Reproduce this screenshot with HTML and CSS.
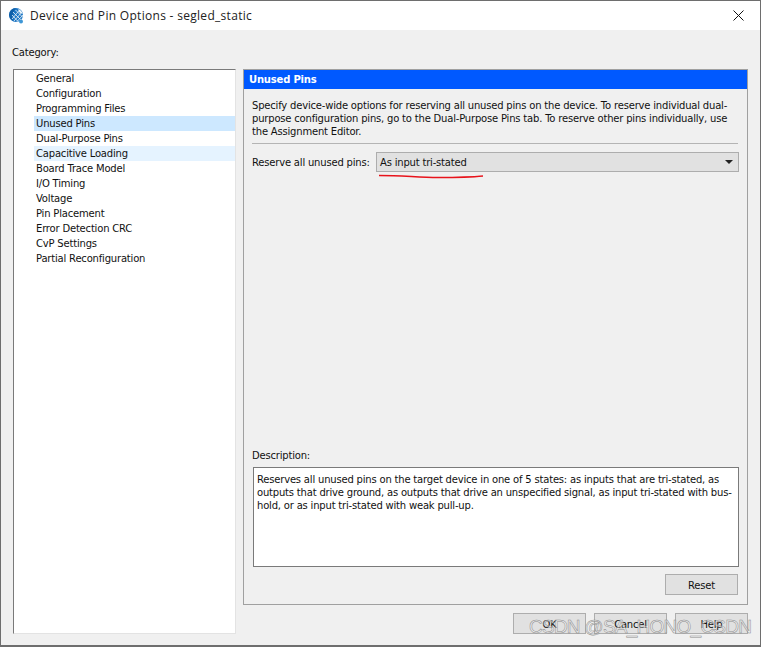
FILE: index.html
```html
<!DOCTYPE html>
<html lang="en">
<head>
<meta charset="utf-8">
<title>Device and Pin Options - segled_static</title>
<link rel="stylesheet" href="styles.css">
</head>
<body>
<div class="window">
  <header class="titlebar">
    <svg class="app-icon" viewBox="0 0 16 16" width="16" height="16" aria-hidden="true">
      <circle cx="7" cy="7" r="7" fill="#1f77c4"/>
      <path d="M0 7A7 7 0 0 1 7 0C4 3 3 8 4 13C2 12 .5 10 0 7Z" fill="#0f5fa8"/>
      <path d="M3 11L11 1.500M5 13L13 4M8 13.500L14 7M4 4L12 12M6.500 2L14 9.500M3 7L9 13.500" stroke="#dbe9f4" stroke-width=".9" fill="none"/>
      <path d="M9 1.200C11.500 1.500 13 3.500 13.500 6L10.500 4.500Z" fill="#f1f7fb"/>
      <circle cx="12" cy="13.500" r="2" fill="#3f97d6"/>
    </svg>
    <span class="title-text">Device and Pin Options - segled_static</span>
    <svg class="close-icon" viewBox="0 0 11 11" width="11" height="11" aria-hidden="true">
      <path d="M.5.5L10.500 10.500M10.500.5L.5 10.500" stroke="#111" stroke-width="1" fill="none"/>
    </svg>
  </header>
  <main class="content">
    <div class="category-label">Category:</div>
    <div class="columns">
      <ul class="category-list">
        <li>General</li>
        <li>Configuration</li>
        <li>Programming Files</li>
        <li class="selected">Unused Pins</li>
        <li>Dual-Purpose Pins</li>
        <li class="hovered">Capacitive Loading</li>
        <li>Board Trace Model</li>
        <li>I/O Timing</li>
        <li>Voltage</li>
        <li>Pin Placement</li>
        <li>Error Detection CRC</li>
        <li>CvP Settings</li>
        <li>Partial Reconfiguration</li>
      </ul>
      <div class="right-column">
        <section class="panel">
          <h2 class="panel-header">Unused Pins</h2>
          <div class="panel-body">
            <p class="intro">Specify device-wide options for reserving all unused pins on the device. To reserve individual dual-<br>purpose configuration pins, go to the Dual-Purpose Pins tab. To reserve other pins individually, use<br>the Assignment Editor.</p>
            <hr class="rule">
            <div class="reserve-row">
              <span class="reserve-label">Reserve all unused pins:</span>
              <div class="combo">
                <span>As input tri-stated</span>
                <span class="arrow"></span>
                <svg class="scribble" viewBox="0 0 106 5" width="106" height="5" aria-hidden="true">
                  <path d="M1 1.500C25 1.500 40 3.500 60 3.500C80 3.500 95 3 105 2" stroke="#e8131b" stroke-width="1.600" fill="none"/>
                </svg>
              </div>
            </div>
            <div class="spacer"></div>
            <div class="desc-label">Description:</div>
            <div class="desc-box">Reserves all unused pins on the target device in one of 5 states: as inputs that are tri-stated, as<br>outputs that drive ground, as outputs that drive an unspecified signal, as input tri-stated with bus-<br>hold, or as input tri-stated with weak pull-up.</div>
            <div class="reset-row"><button class="btn" type="button">Reset</button></div>
          </div>
        </section>
        <div class="dialog-buttons">
          <button class="btn" type="button">OK</button>
          <button class="btn" type="button">Cancel</button>
          <button class="btn" type="button">Help</button>
        </div>
      </div>
    </div>
  </main>
  <div class="watermark">CSDN @SA_HONO_CSDN</div>
</div>
</body>
</html>
```
FILE: styles.css
```css
* { box-sizing: border-box; }
html, body { margin: 0; padding: 0; }
body {
  width: 761px;
  height: 647px;
  overflow: hidden;
  font-family: "DejaVu Sans", sans-serif;
  font-size: 10px;
  letter-spacing: -.19px;
  color: #111;
}
.window {
  position: relative;
  width: 761px;
  height: 647px;
  display: flex;
  flex-direction: column;
  background: #f0f0f0;
  border: 1px solid #6e6e6e;
  border-width: 1px 1px 2px 1px;
}
.titlebar {
  height: 29px;
  background: #fff;
  display: flex;
  align-items: center;
  padding: 0 11px 0 8px;
  flex: none;
}
.app-icon { flex: none; margin-right: 5px; }
.title-text {
  font-family: "Open Sans", sans-serif;
  font-size: 12px;
  letter-spacing: .3px;
  color: #222;
  flex: 1;
}
.close-icon { flex: none; margin-right: 5px; }
.content {
  flex: 1;
  display: flex;
  flex-direction: column;
  padding: 15px 12px 11px 11px;
  min-height: 0;
}
.category-label { height: 24px; line-height: 15px; }
.columns { flex: 1; display: flex; gap: 7px; min-height: 0; padding-left: 1px; }
.category-list {
  list-style: none;
  margin: 0;
  padding: 1px 0 0 20px;
  width: 223px;
  flex: none;
  background: #fff;
  border: 1px solid #e3e3e3;
  border-top-color: #7a7a7a;
  border-left-color: #7a7a7a;
}
.category-list li { height: 15px; line-height: 15px; padding-left: 2px; white-space: nowrap; }
.category-list .selected { background: #cde8ff; }
.category-list .hovered { background: #e5f3ff; }
.right-column { flex: 1; display: flex; flex-direction: column; min-width: 0; }
.panel {
  height: 536px;
  flex: none;
  display: flex;
  flex-direction: column;
  border: 1px solid #a0a0a0;
  background: #f0f0f0;
}
.panel-header {
  margin: 0;
  height: 19px;
  line-height: 20px;
  padding-left: 5px;
  flex: none;
  background: #0059ff;
  color: #fff;
  font-size: 10px;
  font-weight: bold;
}
.panel-body {
  flex: 1;
  display: flex;
  flex-direction: column;
  padding: 10px 8px 9px 8px;
  min-height: 0;
}
.intro { margin: 0; line-height: 13px; white-space: nowrap; }
.rule { margin: 5px 0 8px; border: 0; border-top: 1px solid #b4b4b4; height: 0; width: 486px; }
.reserve-row { display: flex; align-items: center; white-space: nowrap; }
.reserve-label { width: 124px; flex: none; padding-top: 1px; }
.combo {
  position: relative;
  flex: 1;
  height: 20px;
  line-height: 20px;
  padding-left: 3px;
  background: #e1e1e1;
  border: 1px solid #adadad;
}
.arrow {
  position: absolute;
  right: 5px;
  top: 7px;
  width: 0;
  height: 0;
  border-left: 4px solid transparent;
  border-right: 4px solid transparent;
  border-top: 4px solid #222;
}
.scribble { position: absolute; left: 1px; top: 21px; }
.spacer { flex: 1; }
.desc-label { line-height: 13px; height: 18px; }
.desc-box {
  height: 100px;
  margin-left: 1px;
  padding: 5px 3px;
  line-height: 13px;
  background: #fff;
  border: 1px solid #7a7a7a;
  white-space: nowrap;
}
.reset-row { display: flex; justify-content: flex-end; margin-top: 7px; padding-right: 1px; }
.btn {
  width: 73px;
  height: 21px;
  padding: 1px 0 0;
  background: #e1e1e1;
  border: 1px solid #adadad;
  font: inherit;
  letter-spacing: inherit;
  color: #111;
}
.dialog-buttons {
  display: flex;
  justify-content: flex-end;
  gap: 8px;
  margin-top: 8px;
}
.watermark {
  position: absolute;
  left: 528px;
  top: 615px;
  font-family: "Liberation Sans", sans-serif;
  font-size: 19px;
  letter-spacing: -.75px;
  line-height: 22px;
  white-space: nowrap;
  color: rgba(255, 255, 255, .45);
  -webkit-text-stroke: .5px #8a8a8a;
}
```
